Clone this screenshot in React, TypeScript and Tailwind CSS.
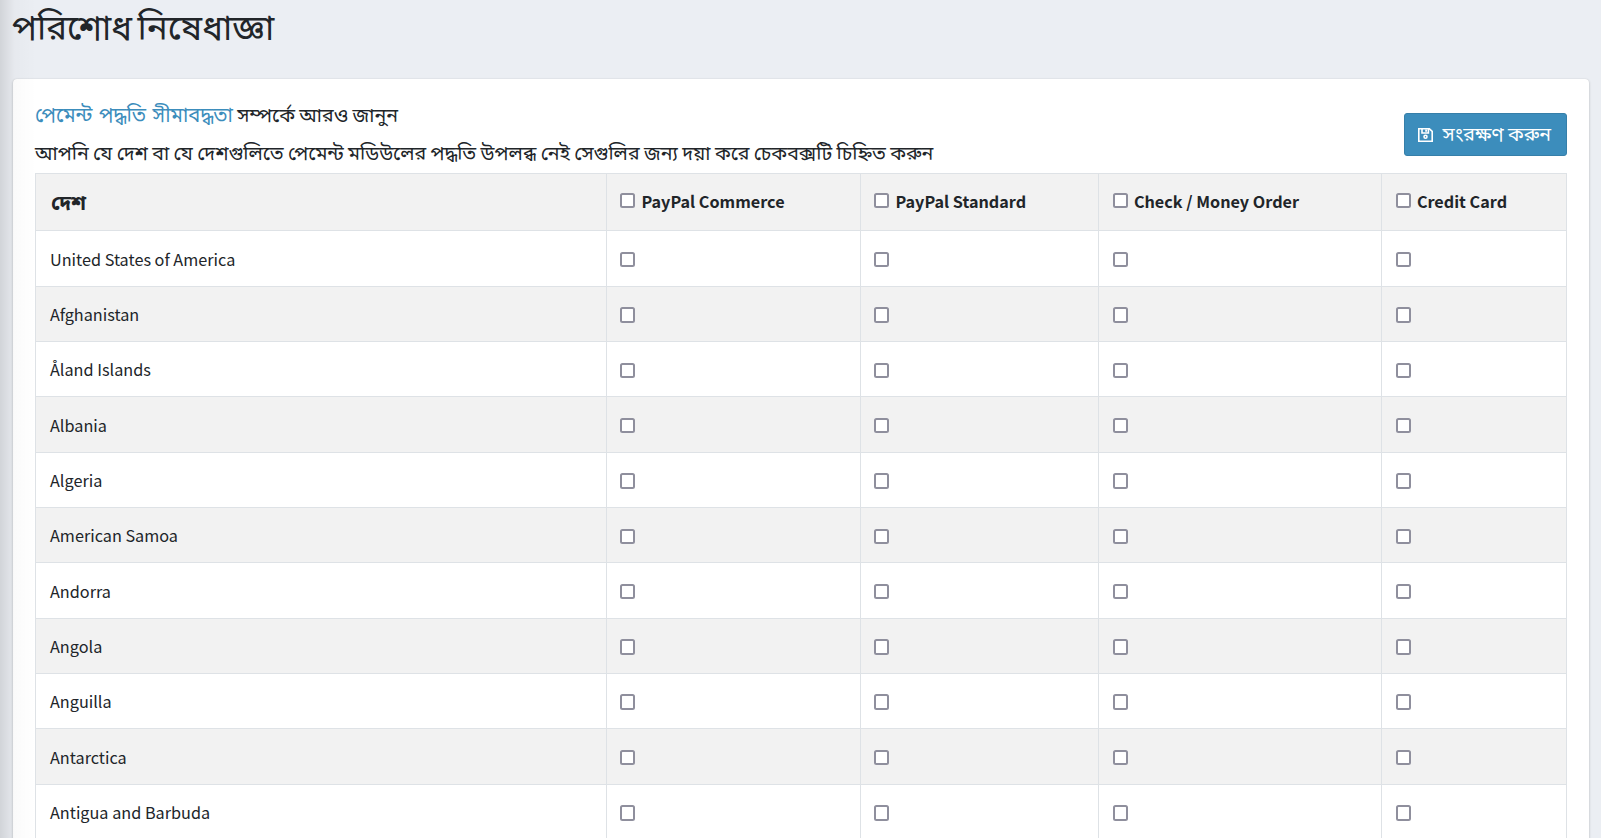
const methods = ["PayPal Commerce", "PayPal Standard", "Check / Money Order", "Credit Card"];

const countries = [
  "United States of America",
  "Afghanistan",
  "Åland Islands",
  "Albania",
  "Algeria",
  "American Samoa",
  "Andorra",
  "Angola",
  "Anguilla",
  "Antarctica",
  "Antigua and Barbuda",
];

const row = "grid grid-cols-[571px_254px_238px_283px_185px] border-b border-[#dee2e6]";
const cell = "flex items-center border-l border-[#dee2e6]";

function Box() {
  return (
    <input
      type="checkbox"
      className="block size-[15.4px] shrink-0 appearance-none rounded-[2.5px] border-2 border-[#8f8f9d] bg-white"
    />
  );
}

function SaveIcon() {
  return (
    <svg viewBox="0 0 15 14" className="mt-px h-[14px] w-[15px]" fill="none" stroke="currentColor" strokeWidth="1.6">
      <path d="M.8.8h10.6l2.8 2.6v9.8H.8z" />
      <path d="M4 1v4h6.4V1" />
      <path d="M7.2 1.6h1.8v2.2H7.2z" fill="currentColor" stroke="none" />
      <circle cx="7.5" cy="8.8" r="1.5" />
    </svg>
  );
}

export default function App() {
  return (
    <div className="relative h-[838px] w-[1601px] overflow-hidden bg-[#ebeef3] font-['Noto_Sans_CJK_SC','Noto_Sans_Bengali',sans-serif] text-[#212529]">
      <h1 className="h-[79px] pl-[12px] text-[34.9px] leading-[51px] [word-spacing:-2.5px] whitespace-nowrap">
        পরিশোধ নিষেধাজ্ঞা
      </h1>
      <main className="ml-[13px] h-[780px] w-[1576px] rounded-t-[4px] bg-white px-[22px] shadow-[0_0_1px_rgba(0,0,0,0.13),0_1px_3px_rgba(0,0,0,0.2)]">
        <div className="flex h-[94px] w-[1532px] justify-between">
          <div className="pt-[16px] text-[19.57px] leading-[37px] whitespace-nowrap">
            <p>
              <a href="#" className="text-[20.2px] text-[#3c8dbc] [word-spacing:2px]">পেমেন্ট পদ্ধতি সীমাবদ্ধতা</a> সম্পর্কে আরও জানুন
            </p>
            <p className="pt-px">
              আপনি যে দেশ বা যে দেশগুলিতে পেমেন্ট মডিউলের পদ্ধতি উপলব্ধ নেই সেগুলির জন্য দয়া করে চেকবক্সটি চিহ্নিত করুন
            </p>
          </div>
          <button className="mt-[34px] flex h-[43px] w-[163px] items-center rounded-[3px] border border-[#367fa9] bg-[#3c8dbc] pb-px pl-[13px] text-[19.5px] whitespace-nowrap text-white">
            <SaveIcon />
            <span className="mb-[2px] ml-[9.5px]">সংরক্ষণ করুন</span>
          </button>
        </div>
        <div className="w-[1532px] border-t border-r border-[#dee2e6]">
          <div className={`${row} h-[57.4px] bg-[#f2f2f2] font-bold`}>
            <div className={`${cell} pb-[2px] pl-[15px] text-[20.8px]`}>দেশ</div>
            {methods.map((m, i) => (
              <div key={m} className={`${cell} pb-[3px] text-[16.2px] ${i < 2 ? "pl-[13px]" : "pl-[14px]"}`}>
                <Box />
                <span className={i < 2 ? "ml-[6px]" : "ml-[5.5px]"}>{m}</span>
              </div>
            ))}
          </div>
          {countries.map((c, i) => (
            <div key={c} className={`${row} h-[55.34px] ${i % 2 ? "bg-[#f2f2f2]" : "bg-white"}`}>
              <div className={`${cell} pt-[0.5px] pl-[14px] text-[16.24px]`}>{c}</div>
              {methods.map((m, j) => (
                <div key={m} className={`${cell} pt-[2px] ${j < 2 ? "pl-[13px]" : "pl-[14px]"}`}>
                  <Box />
                </div>
              ))}
            </div>
          ))}
        </div>
      </main>
      <div className="pointer-events-none absolute inset-y-0 left-0 w-[36px] bg-linear-to-r from-black/11 via-black/2 via-40% to-transparent" />
    </div>
  );
}
